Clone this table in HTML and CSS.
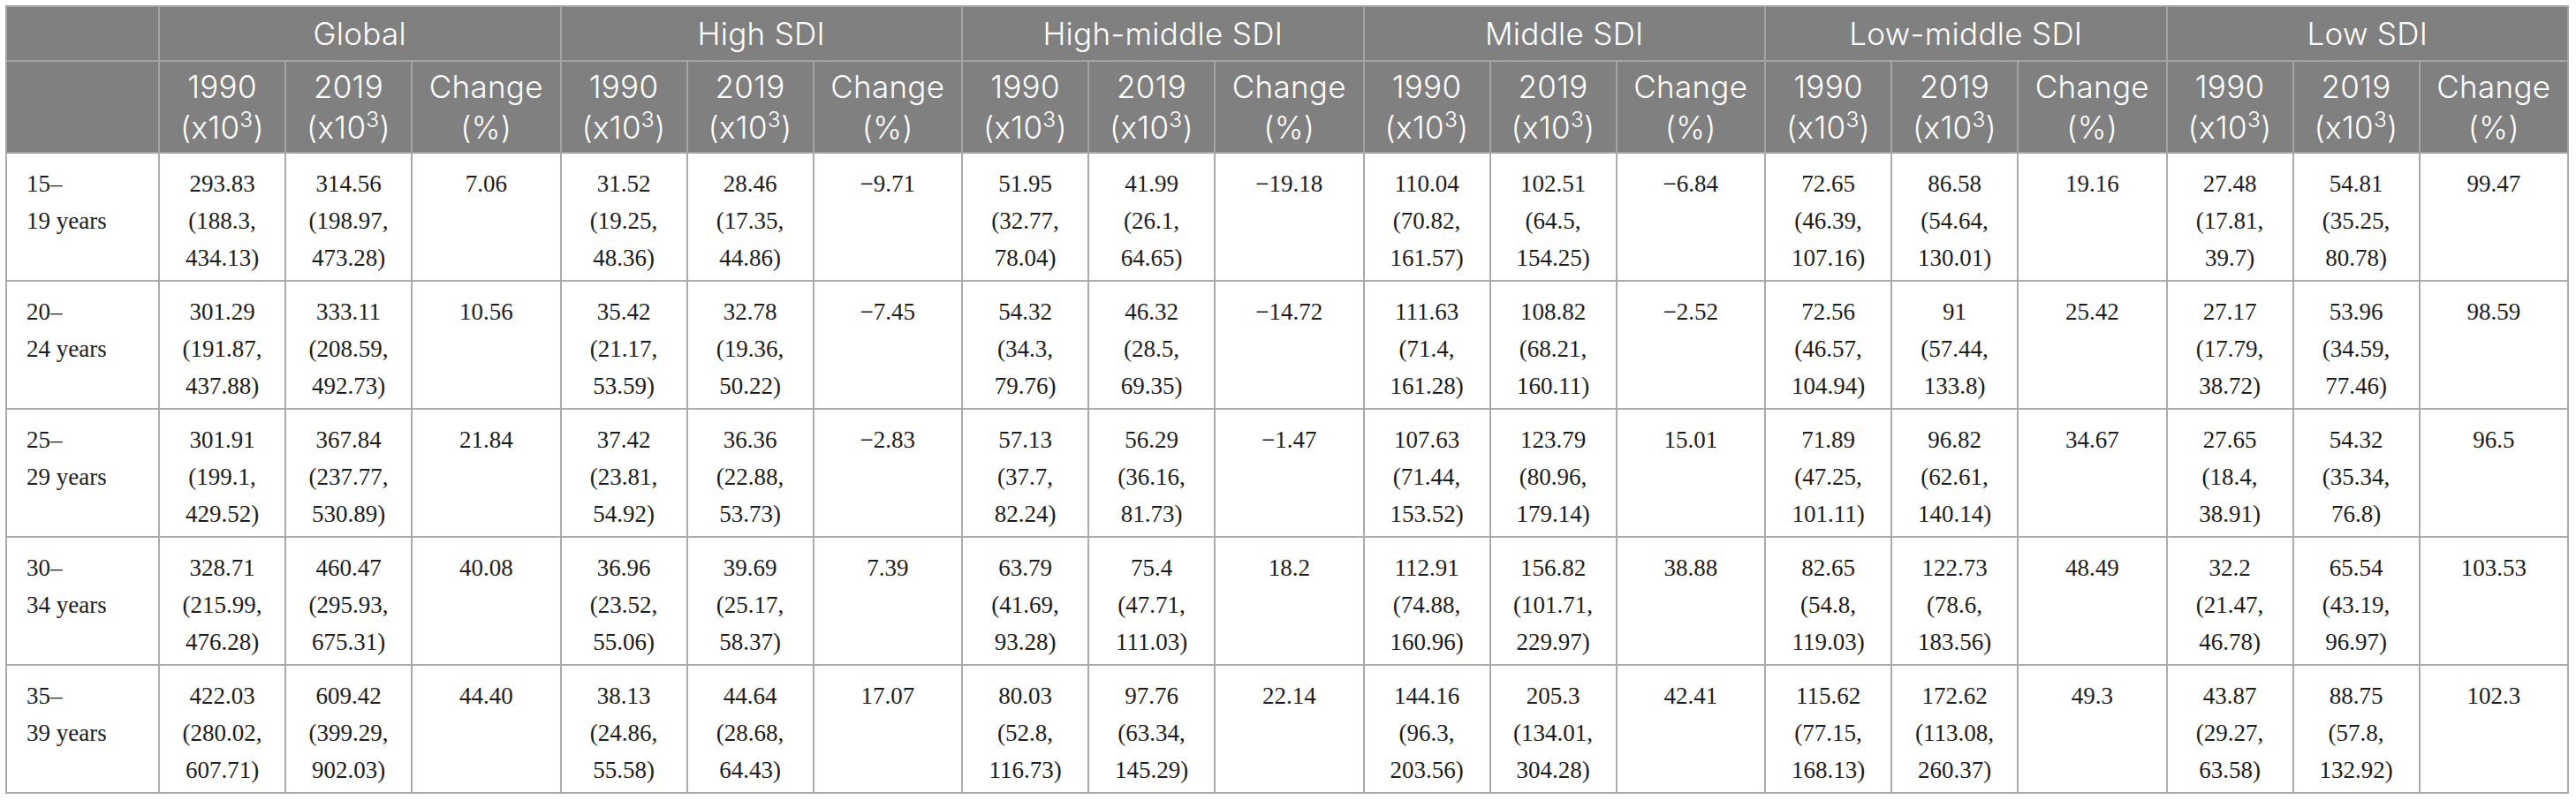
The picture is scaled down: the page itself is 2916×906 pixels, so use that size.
FILE: index.html
```html
<!DOCTYPE html>
<html lang="en">
<head>
<meta charset="utf-8">
<title>Incidence by SDI</title>
<link rel="stylesheet" href="styles.css">
</head>
<body>
<table class="data">
  <colgroup>
    <col class="c-age">
    <col class="c-yr"><col class="c-yr"><col class="c-chg">
    <col class="c-yr"><col class="c-yr"><col class="c-chg">
    <col class="c-yr"><col class="c-yr"><col class="c-chg">
    <col class="c-yr"><col class="c-yr"><col class="c-chg">
    <col class="c-yr"><col class="c-yr"><col class="c-chg">
    <col class="c-yr"><col class="c-yr"><col class="c-chg">
  </colgroup>
  <thead>
    <tr class="h-group">
      <th></th>
      <th colspan="3">Global</th>
      <th colspan="3">High SDI</th>
      <th colspan="3">High-middle SDI</th>
      <th colspan="3">Middle SDI</th>
      <th colspan="3">Low-middle SDI</th>
      <th colspan="3">Low SDI</th>
    </tr>
    <tr class="h-cols">
      <th></th>
      <th>1990<br>(x10<sup>3</sup>)</th><th>2019<br>(x10<sup>3</sup>)</th><th>Change<br>(%)</th>
      <th>1990<br>(x10<sup>3</sup>)</th><th>2019<br>(x10<sup>3</sup>)</th><th>Change<br>(%)</th>
      <th>1990<br>(x10<sup>3</sup>)</th><th>2019<br>(x10<sup>3</sup>)</th><th>Change<br>(%)</th>
      <th>1990<br>(x10<sup>3</sup>)</th><th>2019<br>(x10<sup>3</sup>)</th><th>Change<br>(%)</th>
      <th>1990<br>(x10<sup>3</sup>)</th><th>2019<br>(x10<sup>3</sup>)</th><th>Change<br>(%)</th>
      <th>1990<br>(x10<sup>3</sup>)</th><th>2019<br>(x10<sup>3</sup>)</th><th>Change<br>(%)</th>
    </tr>
  </thead>
  <tbody>
    <tr>
      <td class="age">15–<br>19 years</td>
      <td>293.83<br>(188.3, 434.13)</td><td>314.56<br>(198.97, 473.28)</td><td>7.06</td>
      <td>31.52<br>(19.25, 48.36)</td><td>28.46<br>(17.35, 44.86)</td><td>−9.71</td>
      <td>51.95<br>(32.77, 78.04)</td><td>41.99<br>(26.1, 64.65)</td><td>−19.18</td>
      <td>110.04<br>(70.82, 161.57)</td><td>102.51<br>(64.5, 154.25)</td><td>−6.84</td>
      <td>72.65<br>(46.39, 107.16)</td><td>86.58<br>(54.64, 130.01)</td><td>19.16</td>
      <td>27.48<br>(17.81, 39.7)</td><td>54.81<br>(35.25, 80.78)</td><td>99.47</td>
    </tr>
    <tr>
      <td class="age">20–<br>24 years</td>
      <td>301.29<br>(191.87, 437.88)</td><td>333.11<br>(208.59, 492.73)</td><td>10.56</td>
      <td>35.42<br>(21.17, 53.59)</td><td>32.78<br>(19.36, 50.22)</td><td>−7.45</td>
      <td>54.32<br>(34.3, 79.76)</td><td>46.32<br>(28.5, 69.35)</td><td>−14.72</td>
      <td>111.63<br>(71.4, 161.28)</td><td>108.82<br>(68.21, 160.11)</td><td>−2.52</td>
      <td>72.56<br>(46.57, 104.94)</td><td>91<br>(57.44, 133.8)</td><td>25.42</td>
      <td>27.17<br>(17.79, 38.72)</td><td>53.96<br>(34.59, 77.46)</td><td>98.59</td>
    </tr>
    <tr>
      <td class="age">25–<br>29 years</td>
      <td>301.91<br>(199.1, 429.52)</td><td>367.84<br>(237.77, 530.89)</td><td>21.84</td>
      <td>37.42<br>(23.81, 54.92)</td><td>36.36<br>(22.88, 53.73)</td><td>−2.83</td>
      <td>57.13<br>(37.7, 82.24)</td><td>56.29<br>(36.16, 81.73)</td><td>−1.47</td>
      <td>107.63<br>(71.44, 153.52)</td><td>123.79<br>(80.96, 179.14)</td><td>15.01</td>
      <td>71.89<br>(47.25, 101.11)</td><td>96.82<br>(62.61, 140.14)</td><td>34.67</td>
      <td>27.65<br>(18.4, 38.91)</td><td>54.32<br>(35.34, 76.8)</td><td>96.5</td>
    </tr>
    <tr>
      <td class="age">30–<br>34 years</td>
      <td>328.71<br>(215.99, 476.28)</td><td>460.47<br>(295.93, 675.31)</td><td>40.08</td>
      <td>36.96<br>(23.52, 55.06)</td><td>39.69<br>(25.17, 58.37)</td><td>7.39</td>
      <td>63.79<br>(41.69, 93.28)</td><td>75.4<br>(47.71, 111.03)</td><td>18.2</td>
      <td>112.91<br>(74.88, 160.96)</td><td>156.82<br>(101.71, 229.97)</td><td>38.88</td>
      <td>82.65<br>(54.8, 119.03)</td><td>122.73<br>(78.6, 183.56)</td><td>48.49</td>
      <td>32.2<br>(21.47, 46.78)</td><td>65.54<br>(43.19, 96.97)</td><td>103.53</td>
    </tr>
    <tr>
      <td class="age">35–<br>39 years</td>
      <td>422.03<br>(280.02, 607.71)</td><td>609.42<br>(399.29, 902.03)</td><td>44.40</td>
      <td>38.13<br>(24.86, 55.58)</td><td>44.64<br>(28.68, 64.43)</td><td>17.07</td>
      <td>80.03<br>(52.8, 116.73)</td><td>97.76<br>(63.34, 145.29)</td><td>22.14</td>
      <td>144.16<br>(96.3, 203.56)</td><td>205.3<br>(134.01, 304.28)</td><td>42.41</td>
      <td>115.62<br>(77.15, 168.13)</td><td>172.62<br>(113.08, 260.37)</td><td>49.3</td>
      <td>43.87<br>(29.27, 63.58)</td><td>88.75<br>(57.8, 132.92)</td><td>102.3</td>
    </tr>
  </tbody>
</table>
</body>
</html>
```

FILE: styles.css
```css
html, body {
  margin: 0;
  background: #ffffff;
}

body {
  padding: 6px 0 0 6px;
}

.data {
  border-collapse: collapse;
  table-layout: fixed;
  width: 2900px;
  border: 2px solid #a9a9a9;
}

.c-age { width: 173px; }
.c-yr { width: 143px; }
.c-chg { width: 168.5px; }

.data th,
.data td {
  border: 2px solid #ababab;
}

.data thead th {
  background: #808080;
  color: #ffffff;
  font-family: "Inter", "Open Sans", sans-serif;
  font-weight: 300;
  font-size: 35px;
  letter-spacing: 0.3px;
  text-align: center;
  vertical-align: middle;
  padding: 0 4px;
  border-color: #a4a4a4;
}

.h-group th {
  height: 60px;
  line-height: 44px;
}

.h-cols th {
  height: 102px;
  line-height: 46px;
}

.h-cols sup {
  font-size: 0.7em;
  line-height: 0;
  vertical-align: 0.55em;
}

.data tbody td {
  font-family: "Liberation Serif", "Times New Roman", serif;
  font-size: 27px;
  line-height: 42px;
  color: #1c1c1c;
  text-align: center;
  vertical-align: top;
  height: 130px;
  padding: 13px 10px 0 10px;
}

.data tbody td.age {
  text-align: left;
  padding-left: 22px;
}
```
